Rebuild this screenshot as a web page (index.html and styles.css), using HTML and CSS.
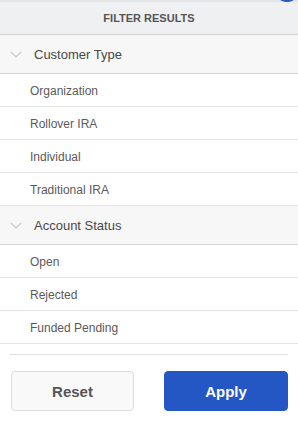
FILE: index.html
```
<!DOCTYPE html>
<html lang="en">
<head>
    <meta charset="UTF-8">
    <meta name="viewport" content="width=device-width, initial-scale=1.0">
    <title>Filter Results</title>
    <link rel="stylesheet" href="styles.css">
</head>
<body>

    <div class="panel">
        <span class="badge-tip"></span>

        <div class="panel-header">Filter Results</div>

        <div class="group">
            <div class="group-title">
                <svg class="chevron" width="12" height="7" viewBox="0 0 12 7"><path d="M1 1 L6 6 L11 1" fill="none" stroke="#c8c8c8" stroke-width="1.2"/></svg>
                <span>Customer Type</span>
            </div>
            <div class="option">Organization</div>
            <div class="option">Rollover IRA</div>
            <div class="option">Individual</div>
            <div class="option">Traditional IRA</div>
        </div>

        <div class="group">
            <div class="group-title">
                <svg class="chevron" width="12" height="7" viewBox="0 0 12 7"><path d="M1 1 L6 6 L11 1" fill="none" stroke="#c8c8c8" stroke-width="1.2"/></svg>
                <span>Account Status</span>
            </div>
            <div class="option">Open</div>
            <div class="option">Rejected</div>
            <div class="option">Funded Pending</div>
        </div>

        <div class="panel-footer">
            <div class="footer-rule"></div>
            <div class="actions">
                <button class="btn btn-reset">Reset</button>
                <button class="btn btn-apply">Apply</button>
            </div>
        </div>
    </div>

</body>
</html>
```

FILE: styles.css
```
body {
    font-family: "Liberation Sans", Arial, sans-serif;
    margin: 0;
    padding: 0;
    background-color: #ffffff;
    color: #555555;
}

.panel {
    position: relative;
    width: 298px;
    height: 422px;
    background-color: #ffffff;
    border-radius: 0 0 6px 6px;
    overflow: hidden;
}

/* little piece of the toggle above the panel */
.badge-tip {
    position: absolute;
    top: -4px;
    left: 280px;
    width: 14px;
    height: 6px;
    border-radius: 50%;
    background-color: #2a56b8;
}

/* Header */
.panel-header {
    height: 32px;
    line-height: 32px;
    border-top: 2px solid #e4e5e7;
    border-bottom: 1px solid #d2d2d2;
    background-color: #eff0f2;
    text-align: center;
    text-transform: uppercase;
    font-size: 11px;
    font-weight: bold;
    color: #555555;
}

/* Filter groups */
.group-title {
    display: flex;
    align-items: center;
    height: 38px;
    padding-left: 10px;
    background-color: #f7f7f7;
    border-bottom: 1px solid #d6d6d6;
    font-size: 13px;
    color: #484848;
}

.chevron {
    margin-right: 12px;
    margin-top: 1px;
}

.option {
    height: 32px;
    line-height: 34px;
    padding-left: 30px;
    border-bottom: 1px solid #e4e4e4;
    font-size: 12px;
    color: #5a5a5a;
}

/* Footer */
.panel-footer {
    padding: 10px 10px 0 10px;
}

.footer-rule {
    height: 1px;
    background-color: #dedede;
    margin-bottom: 16px;
}

.actions {
    display: flex;
    justify-content: space-between;
    padding-left: 1px;
}

.btn {
    width: 123px;
    height: 40px;
    border-radius: 4px;
    font-family: "Liberation Sans", Arial, sans-serif;
    font-size: 15px;
    font-weight: bold;
    cursor: pointer;
}

.btn-reset {
    background-color: #f9f9f9;
    border: 1px solid #dcdcdc;
    color: #555555;
}

.btn-apply {
    width: 124px;
    background-color: #2457c3;
    border: 1px solid #2457c3;
    color: #ffffff;
}
```
